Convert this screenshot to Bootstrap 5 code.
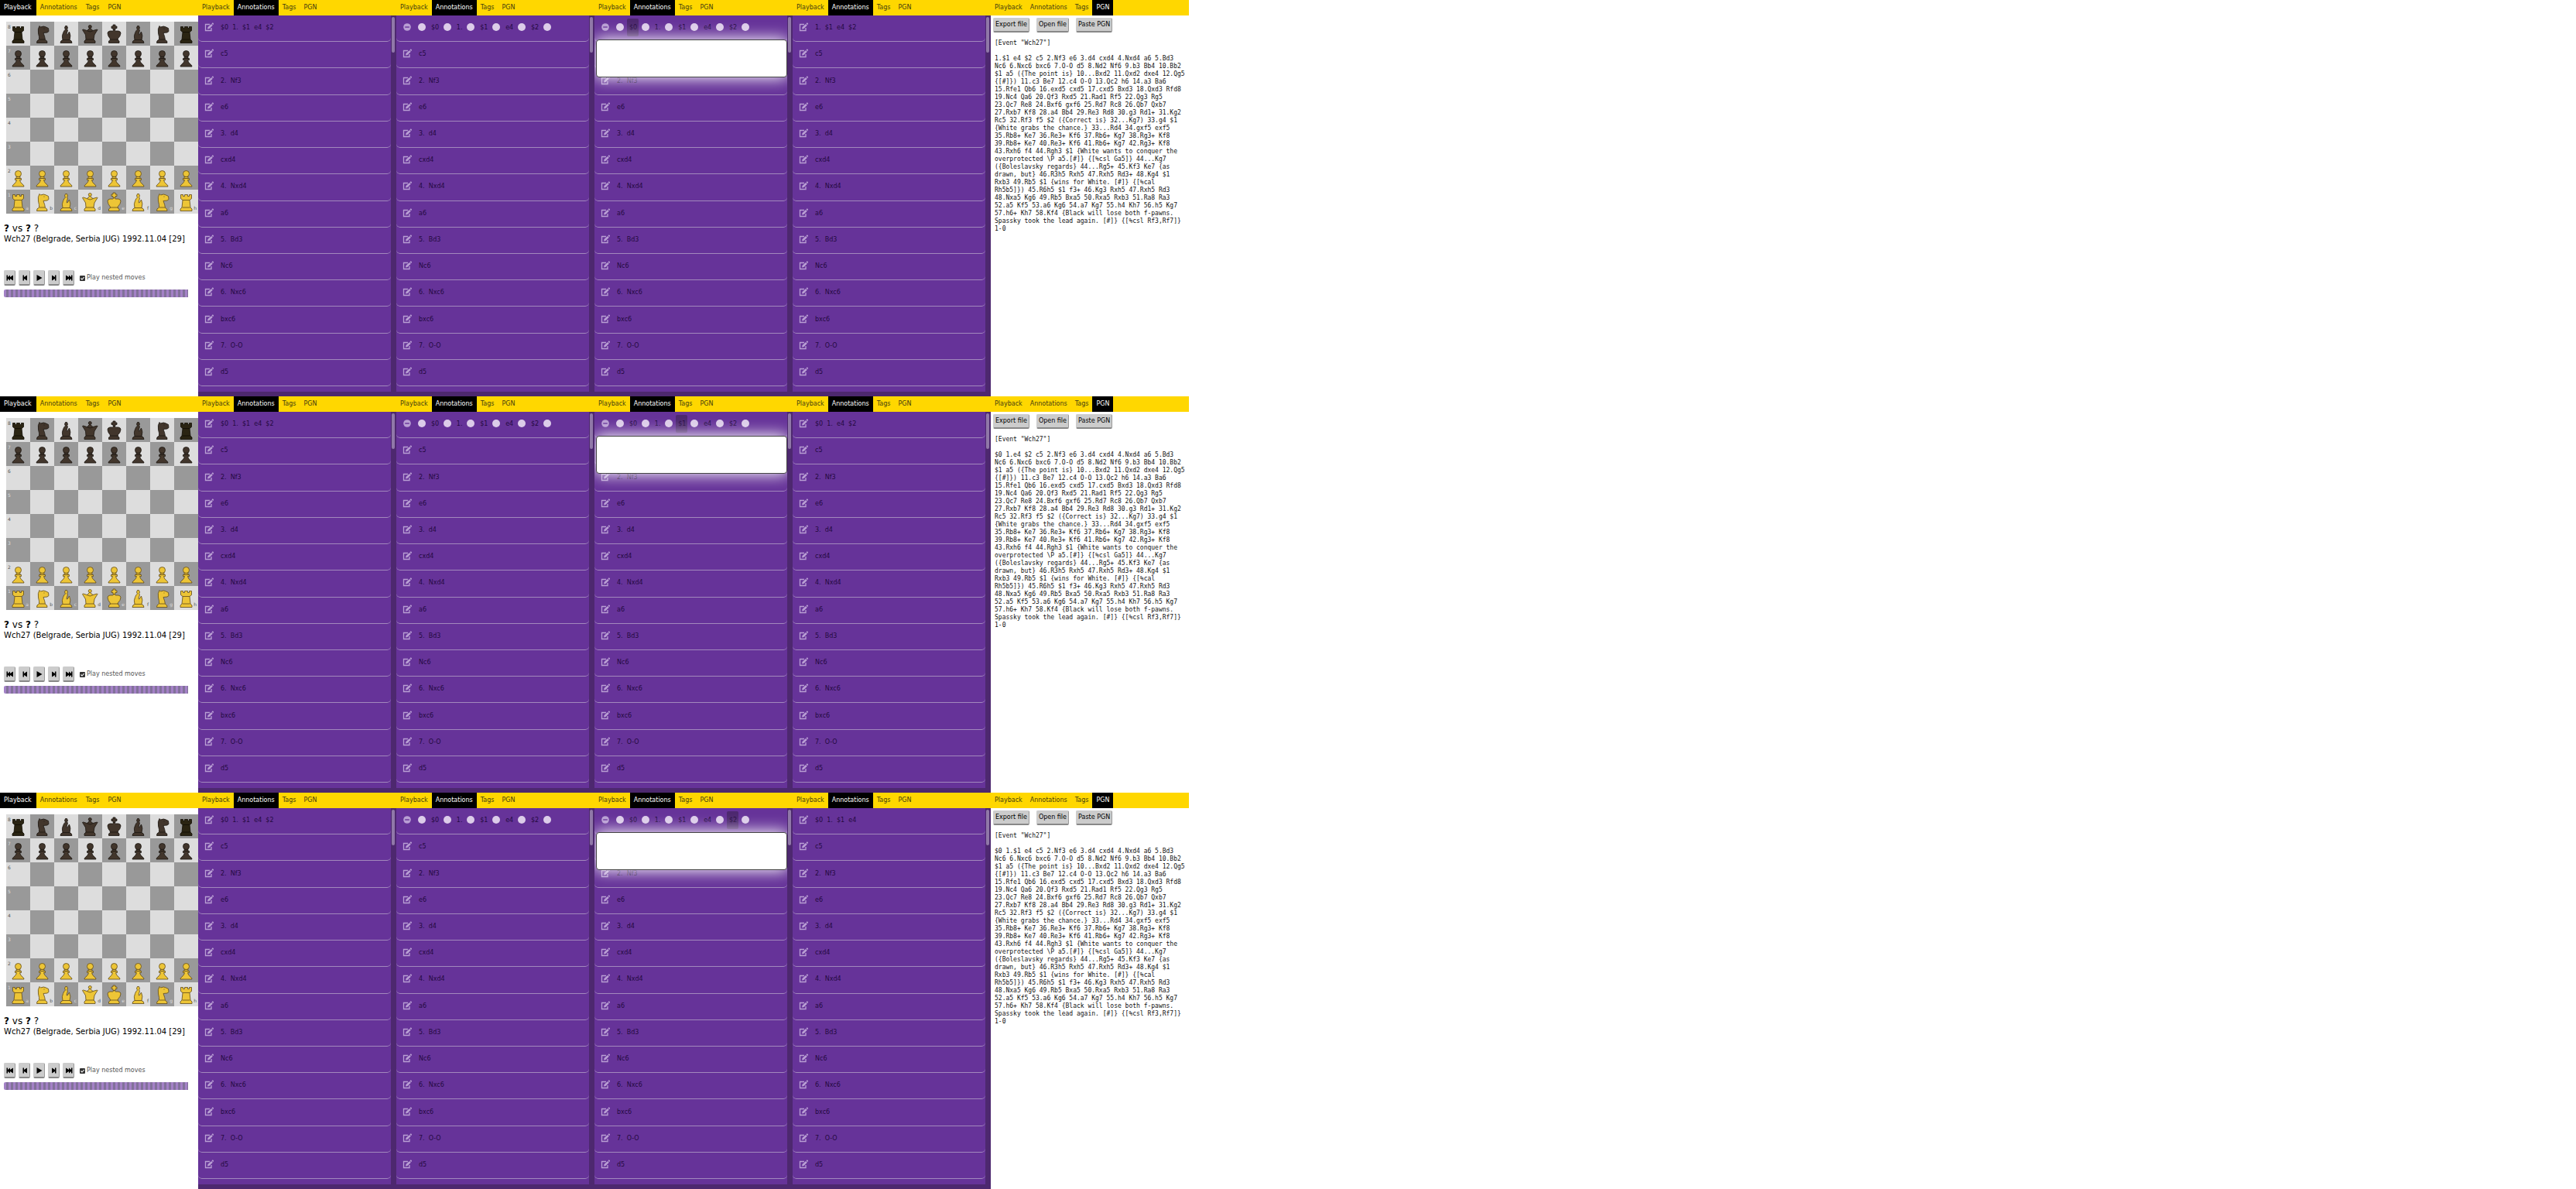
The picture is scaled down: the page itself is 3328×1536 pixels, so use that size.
<!DOCTYPE html>
<html lang="en">
<head>
<meta charset="utf-8">
<meta name="viewport" content="width=device-width, initial-scale=1">
<title>Chess annotations</title>
<link href="https://cdn.jsdelivr.net/npm/bootstrap@5.3.0/dist/css/bootstrap.min.css" rel="stylesheet">
<style>
body{font-family:"DejaVu Sans",sans-serif;font-size:8px;line-height:10px;background:#fff;color:#000}
.strip{height:calc(100vh / 3)}
.pane{width:calc(100% / 13);overflow:hidden}
.tabs{background:gold;height:20px}
.tabs a{color:#443c10;padding:5px;text-decoration:none}
.tabs a.active{background:#000;color:#fff}
.tabs.roomy a{padding-right:6px}
/* playback */
.board{display:grid;grid-template-columns:repeat(8,minmax(0,1fr));margin:8px 0 0 8px}
.sq{position:relative;aspect-ratio:1;min-height:0;background:#ddd;color:#555;font-size:6px;line-height:6px}
.sq.dim{background:#999;color:#ddd}
.sq svg{display:block;width:100%;height:auto;aspect-ratio:1;stroke-width:.8}
.rank{position:absolute;left:2px;top:4px}
.file{position:absolute;right:2px;bottom:4px}
.b{fill:#42362c;stroke:#1c1612}
.br{fill:#2a2412;stroke:#100d04}
.w{fill:#edc536;stroke:#5f4a1c}
.caption{padding:12px 5px 0}
.players{font-size:12px;line-height:14px;margin:0;font-weight:400}
.event{font-size:10px;line-height:14px;margin:0}
.controls{padding:33px 5px 0;gap:4px}
.key{background:#ccc;border:1px solid #ccc;border-right-color:#999;border-bottom:2px solid #888;border-radius:2px;color:#000;padding:0 2px;line-height:16px}
.controls .key{width:15px;height:20px;padding:0;display:flex;align-items:center;justify-content:center}
.controls .key svg{width:10px;height:8px}
.nested{margin-left:3px;gap:2px;color:#555}
.nested input{appearance:none;width:7px;height:7px;margin:0;border-radius:1px;background:#333 url("data:image/svg+xml,%3Csvg xmlns='http://www.w3.org/2000/svg' viewBox='0 0 7 7'%3E%3Cpath d='M1.5 3.5 3 5l2.7-3' fill='none' stroke='%23fff' stroke-width='1.1'/%3E%3C/svg%3E")}
.track{height:10px;margin:5px 13px 0 5px;border-radius:2px 0 0 2px;background:repeating-linear-gradient(90deg,#a381c6 0 3px,#82719a 3px 6px)}
/* annotations */
.notes{background:#4d286f;padding:0 7px 6px 0;position:relative}
.moves{background:#639;padding-bottom:7px;position:relative;overflow:hidden}
.move{flex:1 1 0;min-height:0;border-bottom:1px solid #a288bd;border-radius:5px;padding:0 8px 3px;gap:9px;color:#24093f}
.tool{border:0;background:none;padding:0;color:#b99fd4;width:12px;height:12px}
.tool svg{display:block;width:12px;height:12px}
.text{white-space:pre;padding-top:2px}
.tokens{width:172px;margin-left:-1px}
.plus{width:10px;height:10px;border:0;padding:0;border-radius:50%;background:#dccce9}
.token{border:0;background:none;color:#24093f;padding:1px 2px 0 3px;height:23px;border-radius:2px}
.token.on{background:#4d286f}
.thumb{position:absolute;right:2px;top:2px;width:4px;height:46px;border-radius:2px;background:#9078a8}
.editor{position:absolute;left:2px;right:0;top:31px;height:49px;width:calc(100% - 2px);border:1px solid #444;border-radius:4px;background:#fff;resize:none;box-shadow:0 0 20px 1px #fff}
/* pgn */
.files{padding:3px 3px 0;gap:9px}
.files .key{height:19px}
.pgn{font:8px/10px "DejaVu Sans Mono",monospace;padding:9px 5px 0;margin:0;color:#111;overflow:visible}
</style>
</head>
<body>
<svg class="d-none" aria-hidden="true">
 <symbol id="P" viewBox="0 0 31 31"><path d="M11.5 16.5h8v2h-2q.5 3 3.500 5.500 2 1 2 3h-15q0-2 2-3 3-2.500 3.500-5.500h-2z"/><path d="M13 14.500h5v2h-5z"/><circle cx="15.500" cy="10.500" r="4"/></symbol>
 <symbol id="R" viewBox="0 0 31 31"><path d="M8.500 6.500h3v2h2v-2h4v2h2v-2h3v5l-2.500 2 1 9.500 2 2v2.500h-15V25l2-2 1-9.500-2.500-2z"/><path fill="none" d="M11 13.500h9M10.500 23h10"/></symbol>
 <symbol id="N" viewBox="0 0 31 31"><path d="M8.500 27.500q-.5-3 3-4.500.5-3-1-8-1-6 1.500-9.500l1.500 1.500q4-2 7 0l3 1.500.5 4-2 1.500-5 .5q2 5 2.500 9 3 1 2.500 4z"/><path fill="none" d="M12 23h7M17.500 9h1"/></symbol>
 <symbol id="B" viewBox="0 0 31 31"><path d="M8 27.500q0-3 3-4-1.500-5 .5-9 1-3 3-4.500l-1-2 1-2.500h2l1 2.500-1 2 1 1-1.500 5.500 1 .5 2.500-4q2.500 5 .500 10.500 3 1 3 4z"/><path fill="none" d="M11 23.500h9"/></symbol>
 <symbol id="Q" viewBox="0 0 31 31"><path d="m9.500 17-4-6.500 1-.5 5 1.500L15 8l4 3.500 5.500-1.500.5.500-4 6.500-1 6 2 2v2.500H8V25l2-2z"/><circle cx="15.300" cy="6.500" r="2"/><path fill="none" d="M11 11.500q4.500 3 8.500 0M10 23h10.500"/></symbol>
 <symbol id="K" viewBox="0 0 31 31"><path d="M7 15q0-2.500 3-3h3.500l2-1.500 2 1.500H21q3 .5 3 3-.5 4-3.500 6.500l-.5 2 2 1.500v2.500H8.500V25l2-1.500-.5-2Q7.500 19 7 15z"/><path d="M14 4h3v2h2v2.500h-2v2h-3v-2h-2V6h2z"/><path fill="none" d="M10 23h11"/></symbol>
 <symbol id="edit" viewBox="0 0 12 12"><path d="M7 2.500H1.500v8h7.500V7" fill="none" stroke="currentColor" stroke-width="1.300"/><path fill="currentColor" d="m4 8.500.5-2.500 4.500-4 1.800 1.800-4.300 4.200zM9.500 1.500l.8-.9q.5-.3.900 0l.7.700q.3.500 0 .9l-.8.900z"/></symbol>
 <symbol id="close" viewBox="0 0 12 12"><circle cx="6" cy="6" r="4.800" fill="currentColor"/><path d="M3.200 6h5.600" stroke="#639" stroke-width="1.400"/></symbol>
 <symbol id="k0" viewBox="0 0 10 8"><path d="M.5.5H2V3l3-2.500V3l4-2.500v7L5 5v2.500L2 5v2.500H.5z"/></symbol>
 <symbol id="k1" viewBox="0 0 10 8"><path d="M2.500.5H4V3l4-2.500v7L4 5v2.500H2.500z"/></symbol>
 <symbol id="k2" viewBox="0 0 10 8"><path d="m1.500 0 7 4-7 4z"/></symbol>
 <symbol id="k3" viewBox="0 0 10 8"><path d="M7.500.5H6V3L2 .5v7L6 5v2.500h1.500z"/></symbol>
 <symbol id="k4" viewBox="0 0 10 8"><path d="M9.500.5H8V3L5 .5V3L1 .5v7L5 5v2.500L8 5v2.500h1.500z"/></symbol>
</svg>
<main id="app"></main>
<script>
const icon = (id, cls = "") => `<svg class="${cls}" aria-hidden="true"><use href="#${id}"/></svg>`;
const pane = (active, body) => `<section class="pane d-flex flex-column"><nav class="tabs d-flex flex-shrink-0${active === "Playback" ? " roomy" : ""}">${
  ["Playback","Annotations","Tags","PGN"].map(t => `<a href="#"${t === active ? ' class="active"' : ''}>${t}</a>`).join("")}</nav>${body}</section>`;

function playback(n) {
  const rows = ["RNBQKBNR","PPPPPPPP","","","","","PPPPPPPP","RNBQKBNR"];
  let board = "";
  for (let r = 0; r < 8; r++) for (let f = 0; f < 8; f++) {
    const p = rows[r][f];
    const side = r > 3 ? "w" : p === "R" ? "br" : "b";
    board += `<div class="sq${(r + f) % 2 ? " dim" : ""}">${p ? icon(p, side) : ""}${
      f ? "" : `<span class="rank">${8 - r}</span>`}${r < 7 ? "" : `<span class="file">${"abcdefgh"[f]}</span>`}</div>`;
  }
  const keys = ["First move","Previous move","Play","Next move","Last move"];
  return pane("Playback", `<div class="board flex-shrink-0">${board}</div>
  <div class="caption text-nowrap"><h1 class="players"><b>?</b> vs <b>?</b> ?</h1><p class="event">Wch27 (Belgrade, Serbia JUG) 1992.11.04 [29]</p></div>
  <div class="controls d-flex align-items-center">${keys.map((k, i) => `<button class="key" aria-label="${k}">${icon("k" + i)}</button>`).join("")}
  <div class="nested d-flex align-items-center"><input type="checkbox" id="nested${n}" checked><label for="nested${n}">Play nested moves</label></div></div>
  <div class="track" role="progressbar" aria-label="Moves"></div>`);
}

const later = ["c5","2.  Nf3","e6","3.  d4","cxd4","4.  Nxd4","a6","5.  Bd3","Nc6","6.  Nxc6","bxc6","7.  O-O","d5"];
const move = body => `<div class="move d-flex align-items-center">${body}</div>`;
const plain = t => move(`<button class="tool" aria-label="Edit">${icon("edit")}</button><span class="text">${t}</span>`);
function notes(first, selected) {
  let head = plain(first);
  if (selected !== undefined) {
    const plus = '<button class="plus" aria-label="Add"></button>';
    head = move(`<button class="tool" aria-label="Close">${icon("close")}</button><div class="tokens d-flex align-items-center justify-content-between">${plus}${
      first.split("  ").map((t, i) => `<button class="token${i === selected ? " on" : ""}">${t}</button>${plus}`).join("")}</div>`);
  }
  const editor = selected >= 0 ? '<textarea class="editor" aria-label="Annotation"></textarea>' : "";
  return pane("Annotations", `<div class="notes d-flex flex-fill"><div class="moves d-flex flex-column flex-fill">${head}${later.map(plain).join("")}${editor}</div><span class="thumb"></span></div>`);
}

const game = `Nc6 6.Nxc6 bxc6 7.O-O d5 8.Nd2 Nf6 9.b3 Bb4 10.Bb2
$1 a5 ({The point is} 10...Bxd2 11.Qxd2 dxe4 12.Qg5
{[#]}) 11.c3 Be7 12.c4 O-O 13.Qc2 h6 14.a3 Ba6
15.Rfe1 Qb6 16.exd5 cxd5 17.cxd5 Bxd3 18.Qxd3 Rfd8
19.Nc4 Qa6 20.Qf3 Rxd5 21.Rad1 Rf5 22.Qg3 Rg5
23.Qc7 Re8 24.Bxf6 gxf6 25.Rd7 Rc8 26.Qb7 Qxb7
27.Rxb7 Kf8 28.a4 Bb4 29.Re3 Rd8 30.g3 Rd1+ 31.Kg2
Rc5 32.Rf3 f5 $2 ({Correct is} 32...Kg7) 33.g4 $1
{White grabs the chance.} 33...Rd4 34.gxf5 exf5
35.Rb8+ Ke7 36.Re3+ Kf6 37.Rb6+ Kg7 38.Rg3+ Kf8
39.Rb8+ Ke7 40.Re3+ Kf6 41.Rb6+ Kg7 42.Rg3+ Kf8
43.Rxh6 f4 44.Rgh3 $1 {White wants to conquer the
overprotected \\P a5.[#]} {[%csl Ga5]} 44...Kg7
({Boleslavsky regards} 44...Rg5+ 45.Kf3 Ke7 {as
drawn, but} 46.R3h5 Rxh5 47.Rxh5 Rd3+ 48.Kg4 $1
Rxb3 49.Rb5 $1 {wins for White. [#]} {[%cal
Rh5b5]}) 45.R6h5 $1 f3+ 46.Kg3 Rxh5 47.Rxh5 Rd3
48.Nxa5 Kg6 49.Rb5 Bxa5 50.Rxa5 Rxb3 51.Ra8 Ra3
52.a5 Kf5 53.a6 Kg6 54.a7 Kg7 55.h4 Kh7 56.h5 Kg7
57.h6+ Kh7 58.Kf4 {Black will lose both f-pawns.
Spassky took the lead again. [#]} {[%csl Rf3,Rf7]}
1-0`;
const pgn = opening => pane("PGN", `<div class="files d-flex text-nowrap">${["Export file","Open file","Paste PGN"].map(b => `<button class="key">${b}</button>`).join("")}</div>
<pre class="pgn">[Event "Wch27"]

${opening} c5 2.Nf3 e6 3.d4 cxd4 4.Nxd4 a6 5.Bd3
${game}</pre>`);

const full = "$0  1.  $1  e4  $2";
document.getElementById("app").innerHTML = [
  [0, "1.  $1  e4  $2", "1.$1 e4 $2"],
  [2, "$0  1.  e4  $2", "$0 1.e4 $2"],
  [4, "$0  1.  $1  e4", "$0 1.$1 e4"]
].map(([sel, after, opening], n) => `<div class="strip d-flex">${playback(n)}${notes(full)}${notes(full, -1)}${notes(full, sel)}${notes(after)}${pgn(opening)}</div>`).join("");
</script>
<script src="https://cdn.jsdelivr.net/npm/bootstrap@5.3.0/dist/js/bootstrap.bundle.min.js"></script>
</body>
</html>
